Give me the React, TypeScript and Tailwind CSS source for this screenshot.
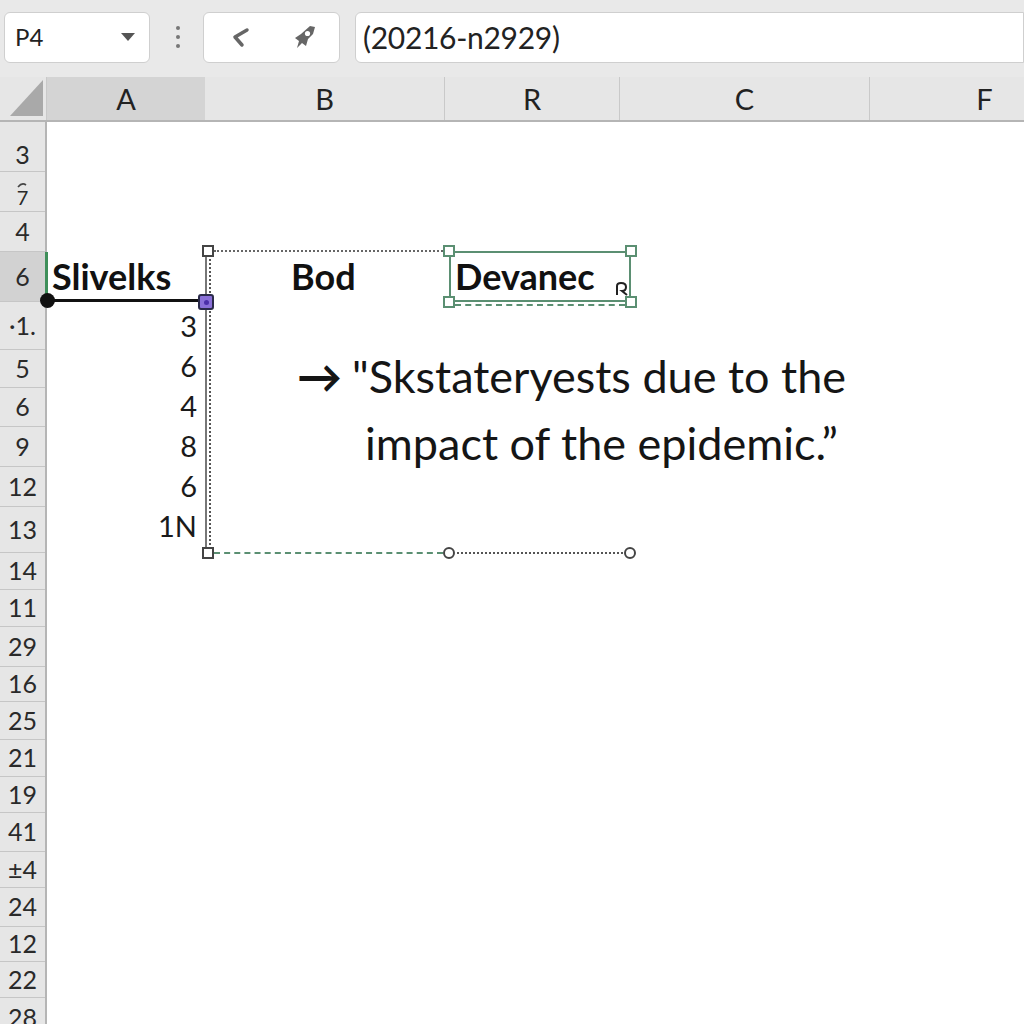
import React from 'react';

const FONT = { fontFamily: 'Lato, "Open Sans", "Liberation Sans", sans-serif' };

const rowLabels = ['3', '7', '4', '6', '·1.', '5', '6', '9', '12', '13', '14', '11', '29', '16', '25', '21', '19', '41', '±4', '24', '12', '22', '28'];
const rowHeights = [50, 40, 40, 50, 48, 38, 39, 40, 40, 46, 37, 37, 40, 35, 38, 37, 36, 39, 36, 39, 35, 36, 40];

const columns = [
  { label: 'A', w: 'w-[158px]', active: true },
  { label: 'B', w: 'w-[240px]' },
  { label: 'R', w: 'w-[175px]' },
  { label: 'C', w: 'w-[250px]' },
  { label: 'F', w: 'w-[230px] shrink-0' },
];

const Handle: React.FC<{ x: number; y: number; green?: boolean; round?: boolean }> = ({ x, y, green, round }) => (
  <div
    className={`absolute w-[12px] h-[12px] bg-white border-2 ${green ? 'border-[#5b8f72]' : 'border-[#444]'} ${round ? 'rounded-full' : ''}`}
    style={{ left: x - 6, top: y - 6 }}
  />
);

const TopBar = () => (
  <div className="h-[77px] shrink-0 bg-[#e9e9e9] flex items-center pl-[4px] pb-[3px]">
    <div className="w-[146px] h-[51px] bg-white border border-[#cfcfcf] rounded-md flex items-center justify-between px-[10px]">
      <span className="text-[24px] text-[#222]">P4</span>
      <span className="w-0 h-0 border-l-[7px] border-r-[7px] border-t-[8px] border-l-transparent border-r-transparent border-t-[#555] mr-[4px]" />
    </div>
    <div className="flex flex-col gap-[5px] ml-[26px]">
      <span className="w-[4px] h-[4px] rounded-full bg-[#777]" />
      <span className="w-[4px] h-[4px] rounded-full bg-[#777]" />
      <span className="w-[4px] h-[4px] rounded-full bg-[#777]" />
    </div>
    <div className="ml-[23px] w-[137px] h-[51px] bg-white border border-[#cfcfcf] rounded-md flex items-center gap-[38px] pl-[24px]">
      <svg width="26" height="26" viewBox="0 0 26 26">
        <path d="M19 6 L7 13 L14 21" fill="none" stroke="#666" strokeWidth="3.5" strokeLinecap="round" strokeLinejoin="round" />
      </svg>
      <svg width="26" height="26" viewBox="0 0 26 26">
        <path d="M18 2 L23 3 L21 10 L16 15 L14 22 L10 19 L5 24 L7 17 L3 14 L9 10 Z" fill="#666" />
        <circle cx="15.5" cy="9.5" r="2.6" fill="#fff" />
      </svg>
    </div>
    <div className="ml-[15px] flex-1 h-[51px] bg-white border border-[#cfcfcf] rounded-l-md flex items-center pl-[7px]">
      <span className="text-[30px] text-[#222] tracking-[-0.3px]">(20216-n2929)</span>
    </div>
  </div>
);

const HeaderRow = () => (
  <div className="h-[45px] shrink-0 flex overflow-hidden bg-[#e6e6e6] border-b-2 border-[#b5b5b5]">
    <div className="w-[47px] shrink-0 flex items-end pl-[10px] pb-[4px] border-r border-[#c9c9c9]">
      <svg width="33" height="36" viewBox="0 0 33 36">
        <path d="M33 0 L33 36 L0 36 Z" fill="#a9a9a9" />
      </svg>
    </div>
    {columns.map((c) => (
      <div
        key={c.label}
        className={`${c.w} shrink-0 flex items-center justify-center text-[29px] text-[#222] ${c.active ? 'bg-[#d4d4d4]' : 'border-r border-[#c9c9c9]'}`}
      >
        {c.label}
      </div>
    ))}
  </div>
);

const RowHeaders = () => (
  <div className="w-[47px] shrink-0 bg-[#e6e6e6] border-r-2 border-[#b5b5b5] flex flex-col">
    {rowLabels.map((l, i) => (
      <div
        key={i}
        className={`flex items-center justify-center shrink-0 border-b border-[#c6c6c6] text-[25px] text-[#2a2a2a] ${i === 3 ? 'bg-[#d2d2d2]' : ''} ${i === 0 ? 'pt-[16px]' : ''}`}
        style={{ height: rowHeights[i] }}
      >
        {i === 1 ? (
          <span className="flex flex-col items-center leading-none pt-[4px]">
            <svg width="10" height="6" viewBox="0 0 10 6">
              <path d="M1 5 Q5 0 9 3" fill="none" stroke="#444" strokeWidth="1.6" />
            </svg>
            <span className="text-[20px] leading-[18px]">7</span>
          </span>
        ) : (
          l
        )}
      </div>
    ))}
  </div>
);

const Overlay = () => (
  <div className="absolute inset-0 pointer-events-none text-[#111]">
    {/* green active-row marker */}
    <div className="absolute left-[45px] top-[130px] w-[3px] h-[50px] bg-[#3f8f5a]" />

    {/* header cells of row 6 */}
    <div className="absolute left-[52px] top-[130px] h-[48px] w-[580px] flex items-center text-[36px] font-bold">
      <span className="w-[239px]">Slivelks</span>
      <span className="w-[164px]">Bod</span>
      <span>Devanec</span>
    </div>

    {/* black underline with dot */}
    <div className="absolute left-[47px] top-[177px] w-[158px] h-[3px] bg-[#111]" />
    <div className="absolute left-[40px] top-[171px] w-[15px] h-[15px] rounded-full bg-[#111]" />

    {/* vertical lines */}
    <div className="absolute left-[205px] top-[129px] w-[2px] h-[302px] bg-[#777]" />
    <div className="absolute left-[209px] top-[129px] h-[302px] border-l-2 border-dotted border-[#555]" />

    {/* top dotted line */}
    <div className="absolute left-[214px] top-[128px] w-[229px] border-t-2 border-dotted border-[#666]" />

    {/* bottom lines */}
    <div className="absolute left-[214px] top-[430px] w-[229px] border-t-2 border-dashed border-[#5b8f72]" />
    <div className="absolute left-[457px] top-[430px] w-[166px] border-t-2 border-dotted border-[#555]" />

    {/* numbers */}
    <div className="absolute right-[827px] top-[184px] flex flex-col items-end text-[29px] leading-[40px] text-[#1a1a1a]">
      {['3', '6', '4', '8', '6', '1N'].map((n, i) => (
        <span key={i}>{n}</span>
      ))}
    </div>

    {/* Devanec selection */}
    <div className="absolute left-[449px] top-[129px] w-[182px] h-[51px] border-2 border-[#5b8f72]" />
    <div className="absolute left-[455px] top-[182px] w-[170px] border-t-2 border-dashed border-[#5b8f72]" />
    <svg className="absolute left-[615px] top-[160px]" width="14" height="14" viewBox="0 0 14 14">
      <path d="M2 13 V4 Q2 1 6 1 Q11 1 11 5 Q11 9 7 9 L12 13" fill="none" stroke="#222" strokeWidth="2" />
    </svg>

    <Handle x={208} y={129} />
    <Handle x={208} y={431} />
    <Handle x={449} y={129} green />
    <Handle x={631} y={129} green />
    <Handle x={449} y={180} green />
    <Handle x={631} y={180} green />
    <Handle x={449} y={431} round />
    <Handle x={630} y={431} round />

    {/* purple handle */}
    <div className="absolute left-[198px] top-[172px] w-[16px] h-[16px] rounded-[3px] bg-[#8a70d8] border-2 border-[#2a2a4a] flex items-center justify-center">
      <div className="w-[5px] h-[5px] rounded-full bg-[#4b2fa8]" />
    </div>

    {/* quote */}
    <div className="absolute left-[297px] top-[226px] text-[45px] leading-[57px] text-[#151515]">
      <div className="flex items-center gap-[10px]">
        <span className="font-bold">→</span>
        <span>"Skstateryests due to the</span>
      </div>
      <div className="pl-[68px] mt-[10px]">impact of the epidemic.”</div>
    </div>
  </div>
);

export default function App() {
  return (
    <div className="w-[1024px] h-[1024px] overflow-hidden bg-white flex flex-col" style={FONT}>
      <TopBar />
      <HeaderRow />
      <div className="relative flex-1 min-h-0 flex">
        <RowHeaders />
        <div className="flex-1 bg-white" />
        <Overlay />
      </div>
    </div>
  );
}
